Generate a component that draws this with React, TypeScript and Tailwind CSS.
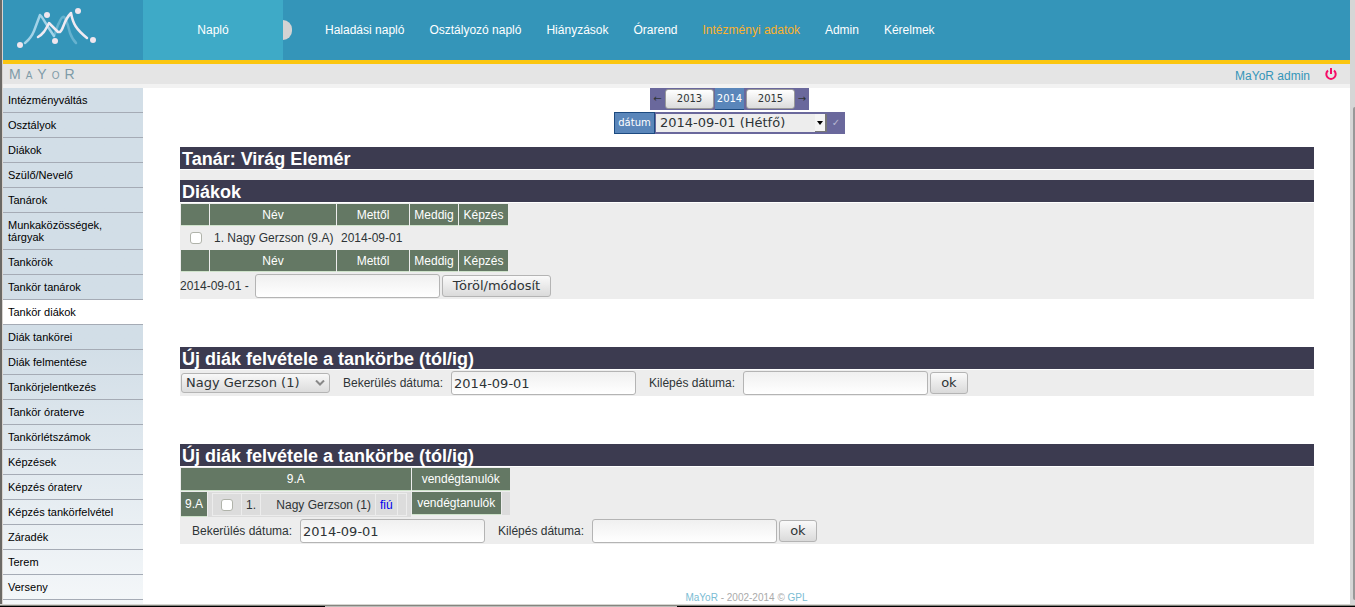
import type { ReactNode } from 'react';

const MENU = ['Haladási napló', 'Osztályozó napló', 'Hiányzások', 'Órarend', 'Intézményi adatok', 'Admin', 'Kérelmek'];

const SIDEBAR = [
  'Intézményváltás',
  'Osztályok',
  'Diákok',
  'Szülő/Nevelő',
  'Tanárok',
  'Munkaközösségek, tárgyak',
  'Tankörök',
  'Tankör tanárok',
  'Tankör diákok',
  'Diák tankörei',
  'Diák felmentése',
  'Tankörjelentkezés',
  'Tankör óraterve',
  'Tankörlétszámok',
  'Képzések',
  'Képzés óraterv',
  'Képzés tankörfelvétel',
  'Záradék',
  'Terem',
  'Verseny',
];

const INPUT =
  "h-6 w-[185px] rounded-[3px] border border-[#b4b4b4] bg-linear-to-b from-[#f0f0f0] to-white px-[2px] font-['DejaVu_Sans',sans-serif] text-[13px] text-[#2e3436]";
const BUTTON =
  "h-[22px] rounded-[3px] border border-[#b4b4b4] bg-linear-to-b from-[#fafafa] to-[#dadada] px-[10px] font-['DejaVu_Sans',sans-serif] text-[13px] leading-5 text-[#2e3436]";
const TH = 'border-b border-[#cfe3cb] bg-[#647864] px-1 text-center font-normal text-white';

function Logo() {
  return (
    <svg viewBox="0 0 82 42" className="h-[42px] w-[82px]" fill="none" strokeLinecap="round" strokeLinejoin="round">
      <path d="M38 30C40 26 41 20 43 17C45 12 47 10 48 11C51 14 52 20 54 27C56 32 58 35 60 37" stroke="#66b2cf" strokeWidth="2.5" />
      <path d="M9 37C14 33 16 30 18 25L24 9C26 10 29 17 38 30" stroke="#a3d3e8" strokeWidth="2.5" />
      <path d="M22 31C27 28 29 25 33 17L42 26H44C48 23 47 15 55 7C57 18 60 23 71 32" stroke="#f0eaf2" strokeWidth="2.5" />
      <g fill="#f0e6ee">
        <circle cx="4" cy="39" r="3" />
        <circle cx="31" cy="9" r="3" />
        <circle cx="39" cy="35" r="3" />
        <circle cx="62" cy="5" r="3" />
        <circle cx="77" cy="34" r="3" />
      </g>
    </svg>
  );
}

function Header() {
  return (
    <header>
      <div className="flex h-16 border-b-4 border-[#fbc611] bg-[#3495b9] text-white">
        <a href="#" aria-label="MaYoR" className="w-[140px] shrink-0 pt-[6px] pl-[13px]">
          <Logo />
        </a>
        <a href="#" className="flex w-[140px] shrink-0 items-center justify-center bg-[#3eaac7]">Napló</a>
        <div className="h-5 w-[9px] shrink-0 self-center rounded-r-full bg-[#d3d3d3]" />
        <nav className="flex items-center gap-[25px] pl-[33px] whitespace-nowrap">
          {MENU.map((item) => (
            <a key={item} href="#" className={item === 'Intézményi adatok' ? 'text-[#fbb12c]' : ''}>{item}</a>
          ))}
        </nav>
      </div>
      <div className="flex h-6 items-center justify-between border-b-4 border-[#f2f2f2] bg-[#e5e5e5] pr-[13px] pl-[6px]">
        <span className="text-[14px] tracking-[5px] text-[#7f9ba8] [font-variant-caps:small-caps]">MaYoR</span>
        <div className="flex items-center gap-[15px]">
          <a href="#" className="pt-[3px] text-[#3495b9]">MaYoR admin</a>
          <button type="button" aria-label="Kilépés">
            <svg viewBox="0 0 12 12" className="h-3 w-3" fill="none" stroke="#f50b67" strokeWidth="2">
              <path d="M3 2.6A4.7 4.7 0 1 0 9 2.6M6 0V6" />
            </svg>
          </button>
        </div>
      </div>
    </header>
  );
}

function Sidebar() {
  return (
    <nav className="w-[140px] shrink-0 bg-linear-to-b from-[#d2dee7] from-50% to-[#f4f7f9]">
      {SIDEBAR.map((item) => (
        <a
          key={item}
          href="#"
          className={`block border-b border-[#a5abb5] px-[5px] py-[6px] text-[11px] leading-3 text-black ${item === 'Tankör diákok' ? 'bg-white' : ''}`}
        >
          {item}
        </a>
      ))}
    </nav>
  );
}

function DateNav() {
  const year = "h-5 w-[49px] rounded-[3px] border border-[#9a9a9a] bg-linear-to-b from-white to-[#dcdcdc] text-[10px] text-[#2e3436]";
  return (
    <div className="flex flex-col items-center gap-[2px] pr-[34px] font-['DejaVu_Sans',sans-serif] text-[10px]">
      <div className="flex h-[22px] items-center bg-[#6a689c] text-[#2e3436]">
        <button type="button" className="w-[15px]">←</button>
        <button type="button" className={year}>2013</button>
        <span className="ml-px flex h-full w-[29px] items-center justify-center border-b border-[#1c4a80] bg-[#5a86ba] text-white">2014</span>
        <button type="button" className={`ml-[2px] ${year}`}>2015</button>
        <button type="button" className="w-[14px]">→</button>
      </div>
      <div className="flex h-[22px] items-center bg-[#6a689c]">
        <label htmlFor="dt" className="flex h-full w-[41px] items-center justify-center border border-[#1c4a80] bg-[#5a86ba] text-white">dátum</label>
        <div className="relative ml-px">
          <select id="dt" className="block h-[18px] w-[171px] appearance-none bg-[#ededed] pl-1 text-[13px] leading-[18px] text-[#2e3436]">
            <option>2014-09-01 (Hétfő)</option>
          </select>
          <span className="pointer-events-none absolute top-0 right-0 flex h-[18px] w-3 items-center justify-center border-r-2 border-b border-[#777] bg-[#f4f4f4]">
            <svg viewBox="0 0 6 4" className="h-1 w-1.5"><path d="M0 0H6L3 4Z" fill="#000" /></svg>
          </span>
        </div>
        <button type="button" className="w-[18px] text-[#b9b8d2]">✓</button>
      </div>
    </div>
  );
}

function Section({ title, children }: { title: string; children?: ReactNode }) {
  return (
    <section className="bg-[#ededed]">
      <h2 className="h-[23px] border-b border-white bg-[#3c3b50] pl-[2px] text-[18px] leading-6 font-bold text-white">{title}</h2>
      {children}
    </section>
  );
}

function DateField({ id, label, value = '' }: { id: string; label: string; value?: string }) {
  return (
    <div className="flex items-center gap-2">
      <label htmlFor={id}>{label}</label>
      <input id={id} type="text" defaultValue={value} className={INPUT} />
    </div>
  );
}

function Check({ label }: { label: string }) {
  return (
    <input
      type="checkbox"
      aria-label={label}
      className="block h-3 w-3 appearance-none rounded-[3px] border border-[#b0b3aa] bg-white checked:bg-[#5a86ba]"
    />
  );
}

function HeadRow() {
  return (
    <tr className="h-[22px]">
      <th className={`w-7 ${TH}`} />
      <th className={`w-[126px] ${TH}`}>Név</th>
      <th className={`w-[72px] ${TH}`}>Mettől</th>
      <th className={`w-12 ${TH}`}>Meddig</th>
      <th className={`w-[49px] ${TH}`}>Képzés</th>
    </tr>
  );
}

function Students() {
  return (
    <Section title="Diákok">
      <form>
        <table className="table-fixed w-[329px] border-separate border-spacing-px whitespace-nowrap">
          <thead><HeadRow /></thead>
          <tbody>
            <tr className="h-[22px]">
              <td className="pl-[9px]"><Check label="Nagy Gerzson" /></td>
              <td className="pl-1">1. Nagy Gerzson (9.A)</td>
              <td className="pl-1">2014-09-01</td>
              <td />
              <td />
            </tr>
          </tbody>
          <tfoot><HeadRow /></tfoot>
        </table>
        <div className="flex items-center gap-[2px] py-px">
          <label htmlFor="out" className="pr-1">2014-09-01 -</label>
          <input id="out" type="text" className={INPUT} />
          <button type="button" className={BUTTON}>Töröl/módosít</button>
        </div>
      </form>
    </Section>
  );
}

function AddStudent() {
  return (
    <Section title="Új diák felvétele a tankörbe (tól/ig)">
      <form className="flex items-center gap-[13px] py-px pl-px">
        <div className="relative">
          <select aria-label="Diák" className="block h-5 w-[149px] appearance-none rounded-[3px] border border-[#b4b4b4] bg-linear-to-b from-[#f8f8f8] to-[#dcdcdc] pl-1 font-['DejaVu_Sans',sans-serif] text-[13px] leading-[18px] text-[#2e3436]">
            <option>Nagy Gerzson (1)</option>
          </select>
          <svg viewBox="0 0 10 6" className="pointer-events-none absolute top-[7px] right-[5px] h-1.5 w-2.5" fill="none" stroke="#888" strokeWidth="2">
            <path d="M1 0.5L5 4.5L9 0.5" />
          </svg>
        </div>
        <DateField id="in1" label="Bekerülés dátuma:" value="2014-09-01" />
        <div className="flex items-center gap-[2px]">
          <DateField id="out1" label="Kilépés dátuma:" />
          <button type="button" className={BUTTON}>ok</button>
        </div>
      </form>
    </Section>
  );
}

function AddByClass() {
  const cell = 'border border-[#ececec] px-1';
  return (
    <Section title="Új diák felvétele a tankörbe (tól/ig)">
      <form>
        <table className="border-separate border-spacing-px whitespace-nowrap">
          <thead>
            <tr className="h-[23px]">
              <th className={TH}>9.A</th>
              <th className={TH}>vendégtanulók</th>
            </tr>
          </thead>
          <tbody>
            <tr className="align-top">
              <td>
                <div className="flex h-[25px] gap-px">
                  <div className={`flex items-center ${TH}`}>9.A</div>
                  <div className="bg-[#dcdcdc] px-1 py-px">
                    <table className="h-[23px] border-collapse">
                      <tbody>
                        <tr>
                          <td className="w-[29px] border border-[#ececec] pl-2"><Check label="Nagy Gerzson (1)" /></td>
                          <td className={cell}>1.</td>
                          <td className={`w-[115px] text-right ${cell}`}>Nagy Gerzson (1)</td>
                          <td className={cell}><a href="#" className="text-[#0000ee]">fiú</a></td>
                          <td className={cell} />
                        </tr>
                      </tbody>
                    </table>
                  </div>
                </div>
              </td>
              <td>
                <div className="flex h-[23px] gap-px">
                  <div className={`flex w-[89px] items-center justify-center ${TH}`}>vendégtanulók</div>
                  <div className="w-2 bg-[#dcdcdc]" />
                </div>
              </td>
            </tr>
          </tbody>
        </table>
        <div className="flex items-center gap-[13px] py-px pl-3">
          <DateField id="in2" label="Bekerülés dátuma:" value="2014-09-01" />
          <div className="flex items-center gap-[2px]">
            <DateField id="out2" label="Kilépés dátuma:" />
            <button type="button" className={BUTTON}>ok</button>
          </div>
        </div>
      </form>
    </Section>
  );
}

export default function App() {
  return (
    <div className="flex min-h-screen flex-col bg-white font-['Liberation_Sans',Arial,sans-serif] text-[12px] leading-[14px] text-[#2e3436]">
      <div className="flex grow border-l-2 border-[#6b6965]">
        <div className="flex min-w-0 grow flex-col border-l border-[#d8d4d0]">
          <Header />
          <div className="flex grow">
            <Sidebar />
            <main className="flex min-w-0 grow flex-col">
              <DateNav />
              <div className="flex flex-col gap-12 pt-[13px] pr-9 pl-[37px]">
                <div>
                  <Section title="Tanár: Virág Elemér"><div className="h-[10px]" /></Section>
                  <Students />
                </div>
                <AddStudent />
                <AddByClass />
              </div>
              <footer className="mt-auto text-center text-[10px] leading-3 text-[#aaa]">
                <a href="#" className="text-[#7bbcd3]">MaYoR</a> - 2002-2014 © <a href="#" className="text-[#7bbcd3]">GPL</a>
              </footer>
            </main>
          </div>
        </div>
        <div className="flex w-[5px] shrink-0 flex-col items-end bg-[#d6d6d6] pt-[107px] pb-1">
          <div className="w-[2px] grow rounded-l-full bg-[#989898]" />
        </div>
      </div>
      <div className="h-[2px] border-b border-[#85857f] bg-[#d6d6d2]" />
      <div className="flex h-px bg-black">
        <div className="ml-[24%] w-[26%] bg-[#bcbcb8]" />
      </div>
    </div>
  );
}
